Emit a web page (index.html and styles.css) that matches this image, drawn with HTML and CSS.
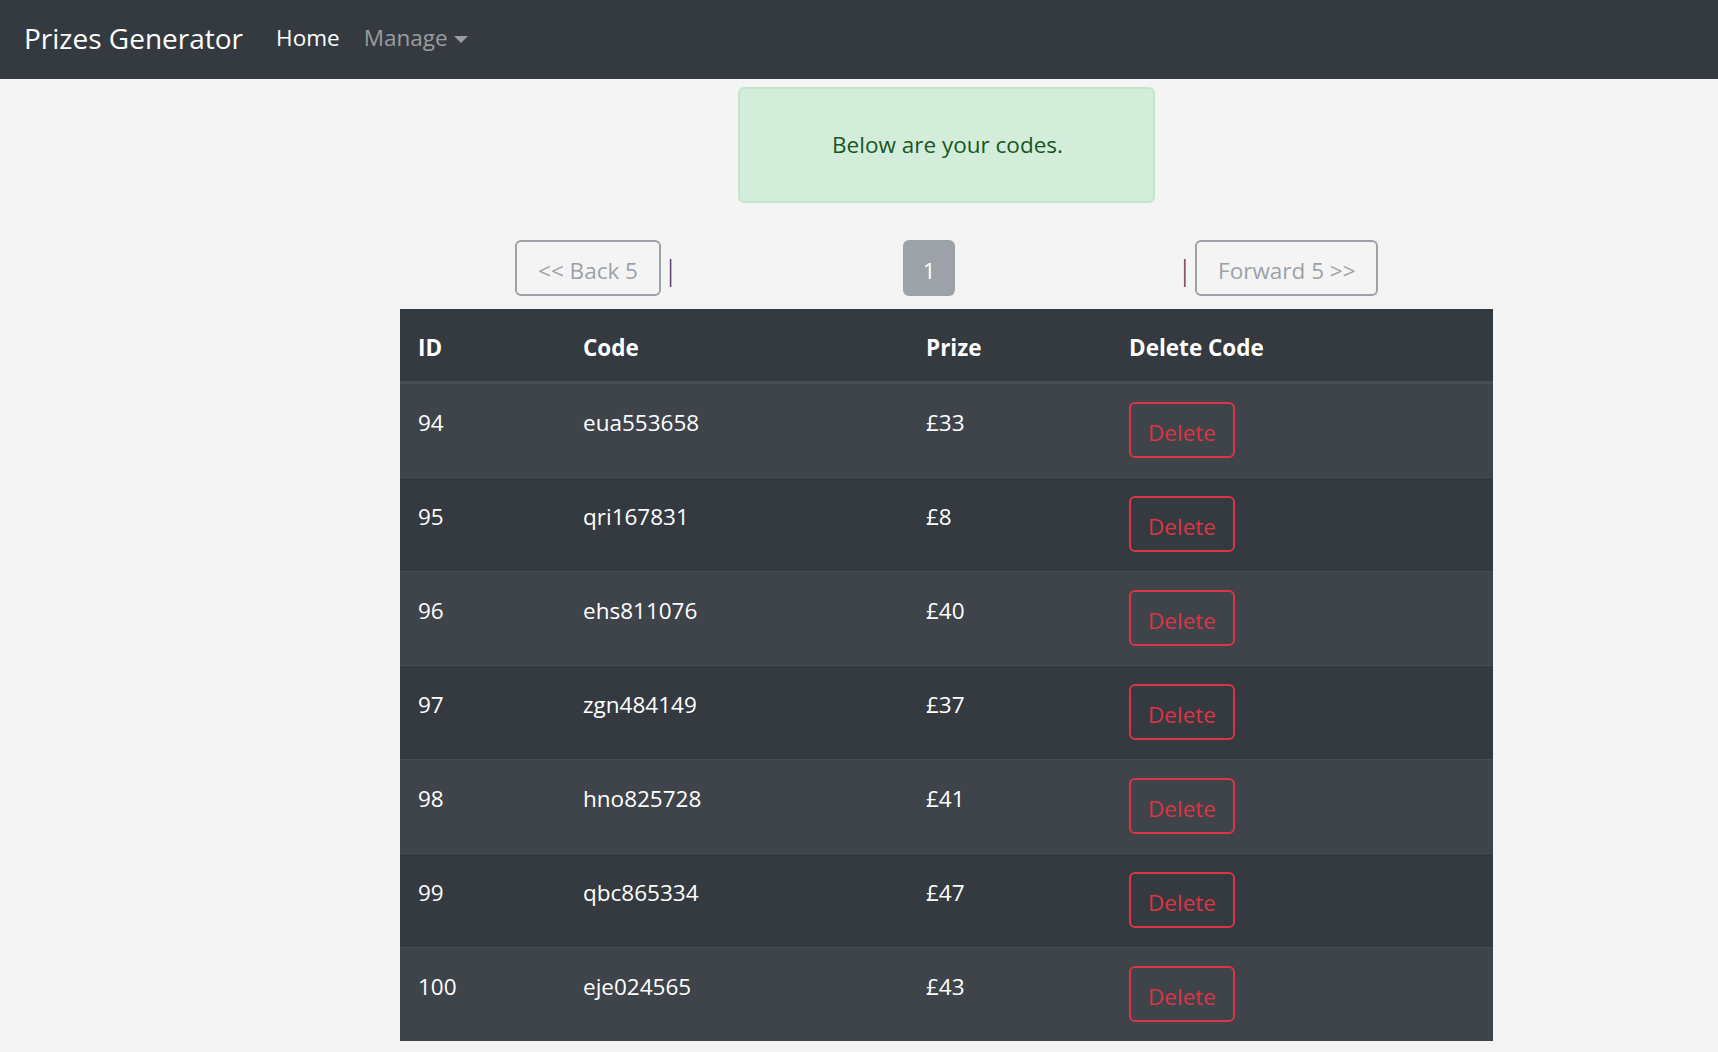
FILE: index.html
```html
<!DOCTYPE html>
<html lang="en">
<head>
<meta charset="utf-8">
<title>Prizes Generator</title>
<link rel="stylesheet" href="styles.css">
</head>
<body>
<nav class="navbar">
  <a class="brand" href="#">Prizes Generator</a>
  <a class="nav-link active" href="#">Home</a>
  <a class="nav-link muted" href="#">Manage<span class="caret"></span></a>
</nav>
<main class="main">
  <div class="alert">Below are your codes.</div>
  <div class="pager">
    <span class="btn btn-outline-disabled back">&lt;&lt; Back 5</span>
    <span class="sep sep-left">|</span>
    <span class="btn btn-page">1</span>
    <span class="sep sep-right">|</span>
    <span class="btn btn-outline-disabled fwd">Forward 5 &gt;&gt;</span>
  </div>
  <table class="codes">
    <colgroup>
      <col class="c-id"><col class="c-code"><col class="c-prize"><col class="c-del">
    </colgroup>
    <thead>
      <tr><th>ID</th><th>Code</th><th>Prize</th><th>Delete Code</th></tr>
    </thead>
    <tbody>
      <tr><td>94</td><td>eua553658</td><td>£33</td><td class="act"><button class="btn-del">Delete</button></td></tr>
      <tr><td>95</td><td>qri167831</td><td>£8</td><td class="act"><button class="btn-del">Delete</button></td></tr>
      <tr><td>96</td><td>ehs811076</td><td>£40</td><td class="act"><button class="btn-del">Delete</button></td></tr>
      <tr><td>97</td><td>zgn484149</td><td>£37</td><td class="act"><button class="btn-del">Delete</button></td></tr>
      <tr><td>98</td><td>hno825728</td><td>£41</td><td class="act"><button class="btn-del">Delete</button></td></tr>
      <tr><td>99</td><td>qbc865334</td><td>£47</td><td class="act"><button class="btn-del">Delete</button></td></tr>
      <tr><td>100</td><td>eje024565</td><td>£43</td><td class="act"><button class="btn-del">Delete</button></td></tr>
    </tbody>
  </table>
</main>
</body>
</html>
```
FILE: styles.css
```css
* { box-sizing: border-box; }
html, body {
  margin: 0;
  padding: 0;
}
body {
  background: #f4f4f4;
  font-family: "Open Sans", "Noto Sans", sans-serif;
  font-size: 22.5px;
  line-height: 36px;
  color: #212529;
}
a { text-decoration: none; }

.navbar {
  height: 79px;
  background: #343a40;
  display: flex;
  align-items: center;
  padding: 0 24px 3px;
}
.brand {
  color: #fff;
  font-size: 28px;
  line-height: 40px;
  margin-right: 21px;
}
.nav-link {
  padding: 0 12px;
  font-size: 22.5px;
  display: flex;
  align-items: center;
}
.nav-link.active { color: #fff; }
.nav-link.muted { color: rgba(255,255,255,0.5); }
.caret {
  display: inline-block;
  margin-left: 6px;
  margin-top: 2px;
  width: 0;
  height: 0;
  border-top: 7px solid rgba(255,255,255,0.5);
  border-left: 7px solid transparent;
  border-right: 7px solid transparent;
}

.main {
  margin-left: 400px;
  width: 1093px;
}
.alert {
  width: 417px;
  height: 116px;
  margin: 8px auto 0;
  padding-left: 2px;
  background: #d4edda;
  border: 2px solid #c3e6cb;
  border-radius: 6px;
  color: #155724;
  display: flex;
  align-items: center;
  justify-content: center;
}

.pager {
  margin-top: 37px;
  height: 56px;
  display: flex;
  align-items: center;
  padding-left: 115px;
}
.btn {
  height: 56px;
  border-radius: 6px;
  display: inline-flex;
  align-items: center;
  justify-content: center;
  padding-top: 5px;
}
.btn-outline-disabled {
  border: 2px solid #9ca2a7;
  color: #9ca2a7;
}
.back { width: 146px; }
.fwd { width: 183px; }
.btn-page {
  width: 52px;
  background: #9ca2a7;
  color: #fff;
}
.sep {
  font-size: 28px;
  line-height: 30px;
  color: #2b3050;
  font-weight: 300;
  padding-top: 2px;
}
.sep-left { margin-left: 2px; margin-right: 225px; }
.sep-right { margin-left: 222px; margin-right: 3px; }

.codes {
  margin-top: 13px;
  width: 1093px;
  border-collapse: collapse;
  background: #343a40;
  color: #fff;
}
.c-id { width: 165px; }
.c-code { width: 343px; }
.c-prize { width: 203px; }
.c-del { width: 382px; }
.codes th {
  text-align: left;
  font-weight: 700;
  padding: 21px 18px 15px;
  line-height: 36px;
  border-bottom: 3px solid #454d55;
}
.codes td {
  padding: 21px 18px 16px;
  line-height: 36px;
  vertical-align: top;
  border-top: 1px solid #454d55;
}
.codes td.act {
  padding: 18px 18px 19px;
}
.codes tbody tr:nth-child(odd) { background: #3e444a; }
.btn-del {
  height: 56px;
  padding: 6px 17px 0;
  border: 2px solid #dc3545;
  border-radius: 6px;
  background: transparent;
  color: #dc3545;
  font-family: "Open Sans", "Noto Sans", sans-serif;
  font-size: 22.5px;
  line-height: 46px;
  display: block;
}
```
